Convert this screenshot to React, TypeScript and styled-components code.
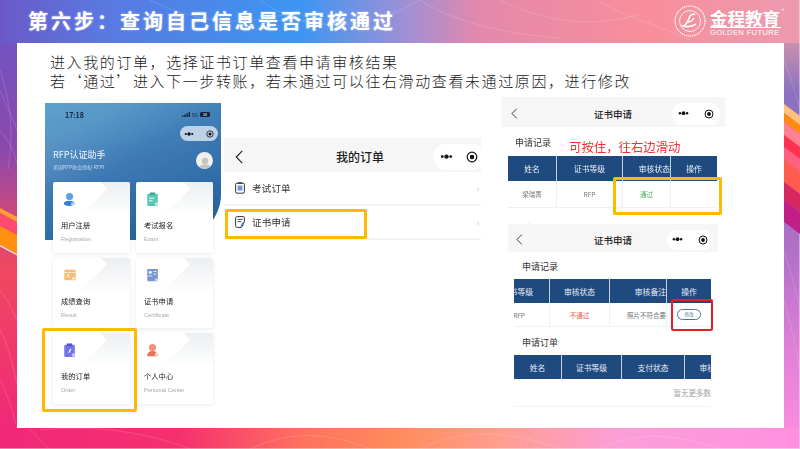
import React from 'react';
import styled, { createGlobalStyle } from 'styled-components';

const GlobalStyle = createGlobalStyle`
  html, body {
    margin: 0;
    padding: 0;
    background: #fff;
  }
  * {
    box-sizing: border-box;
  }
`;

const CJK = `"Noto Sans CJK SC", "Noto Sans", sans-serif`;

const Slide = styled.div`
  position: relative;
  width: 800px;
  height: 449px;
  overflow: hidden;
  font-family: ${CJK};
  box-shadow: inset -1px -1px 0 rgba(255, 255, 255, 0.4);
  background:
    linear-gradient(90deg, #6b58c8 0, #5a78e0 100px, #3c96f2 300px, #9a90d8 400px, #e488ac 480px, #f88f9a 650px, #ec9ab0 800px) top / 100% 43px no-repeat,
    linear-gradient(90deg, #f02878 0, #f5306f 180px, #ff7060 300px, #ff8c5c 400px, #ff9e90 500px, #fc9ed8 620px, #ff90e0 800px) bottom / 100% 21px no-repeat,
    linear-gradient(180deg, #6b58c8 0, #8a48ac 150px, #c84880 210px, #f04860 270px, #f02878 430px) left / 20px 100% no-repeat,
    linear-gradient(180deg, #ec9ab0 0, #c890b0 43px, #8a70c0 95px, #b070c8 250px, #e080d8 350px, #ff90e0 449px) right / 20px 100% no-repeat,
    #fff;
`;

const Leaves = styled.svg`
  position: absolute;
  inset: 0;
  width: 800px;
  height: 449px;
`;

const Header = styled.header`
  position: relative;
  height: 43px;
  display: flex;
  align-items: center;
  justify-content: space-between;
  padding: 0 19px 1px 28px;
`;

const Title = styled.h1`
  margin: 0;
  color: #fff;
  font-size: 20px;
  font-weight: 700;
  letter-spacing: 3px;
  line-height: 26px;
  white-space: nowrap;
  text-shadow: 0 0 2px rgba(255, 255, 255, 0.6);
`;

const Logo = styled.div`
  display: flex;
  align-items: center;
  gap: 4px;
  color: #fff;
`;

const LogoText = styled.div`
  display: flex;
  flex-direction: column;
  width: 71px;
  margin-top: 3px;
`;

const LogoName = styled.div`
  position: relative;
  height: 19px;
  font-size: 17.5px;
  font-weight: 700;
  line-height: 18px;
  white-space: nowrap;
  border-bottom: 1px solid #fff;
  &::after {
    content: '®';
    position: absolute;
    right: -3px;
    top: -1px;
    font-size: 4px;
    line-height: 5px;
    font-weight: 400;
  }
`;

const LogoEn = styled.div`
  font-family: "Liberation Sans", sans-serif;
  font-size: 7.6px;
  line-height: 9px;
  letter-spacing: 0.35px;
  white-space: nowrap;
`;

const Panel = styled.main`
  position: relative;
  width: 767px;
  height: 385px;
  margin-left: 17px;
  background: #fff;
  padding-top: 9px;
`;

const Intro = styled.div`
  margin-left: 33px;
  font-size: 15px;
  font-weight: 300;
  line-height: 19px;
  letter-spacing: 1.6px;
  color: #1c1c1c;
  white-space: nowrap;
`;

const Shots = styled.div`
  display: flex;
  align-items: flex-start;
  margin-top: 7px;
`;

const Home = styled.section`
  position: relative;
  width: 176px;
  margin: 6px 0 0 28px;
  padding: 0 8px;
  filter: blur(0.35px);
  &::before {
    content: '';
    position: absolute;
    inset: 0 0 auto 0;
    height: 137px;
    border-radius: 0 0 46px 0;
    background:
      linear-gradient(150deg, rgba(255, 255, 255, 0.1) 20%, rgba(255, 255, 255, 0) 45%),
      linear-gradient(160deg, #4a96c8 0%, #3e79b4 45%, #1e5c98 100%);
  }
`;

const HomeInner = styled.div`
  position: relative;
  color: #fff;
`;

const Status = styled.div`
  display: flex;
  justify-content: space-between;
  align-items: center;
  height: 23px;
  padding: 0 3px 0 12px;
  font-size: 7px;
  font-weight: 700;
  color: #15233a;
`;

const StatusRight = styled.div`
  display: flex;
  align-items: center;
  gap: 2px;
  font-size: 5px;
  font-weight: 400;
`;

const Battery = styled.span`
  width: 10px;
  height: 5px;
  border-radius: 1.5px;
  background: #15233a;
  color: #fff;
  font-size: 4px;
  line-height: 5px;
  text-align: center;
`;

const Capsule = styled.div<{ $light?: boolean; $w: number; $h: number }>`
  display: flex;
  align-items: center;
  justify-content: space-between;
  width: ${(p) => p.$w}px;
  height: ${(p) => p.$h}px;
  padding: 0 ${(p) => Math.round(p.$h / 4)}px;
  border-radius: ${(p) => p.$h / 2}px;
  background: ${(p) => (p.$light ? '#fff' : 'rgba(225, 235, 245, 0.78)')};
  color: #111;
  flex: none;
`;

const CapsuleRow = styled.div`
  display: flex;
  justify-content: flex-end;
  margin: 0 -5px 0 0;
`;

const AppHead = styled.div`
  display: flex;
  justify-content: space-between;
  align-items: center;
  height: 41px;
`;

const AppName = styled.div`
  margin-top: -3px;
  font-size: 9px;
  line-height: 14px;
  color: #f2f6fb;
`;

const AppSub = styled.div`
  font-size: 5px;
  line-height: 10px;
  color: #c7d8ea;
`;

const Avatar = styled.div`
  display: flex;
  align-items: flex-end;
  justify-content: center;
  width: 17px;
  height: 17px;
  margin-top: -3px;
  border-radius: 50%;
  overflow: hidden;
  background: #f1f0ee;
`;

const Cards = styled.div`
  display: grid;
  grid-template-columns: 77px 77px;
  grid-auto-rows: 70.5px;
  column-gap: 6px;
  row-gap: 5px;
`;

const Card = styled.div`
  position: relative;
  overflow: hidden;
  display: flex;
  flex-direction: column;
  padding: 10px 8px 0;
  border-radius: 2px;
  background: #fff;
  box-shadow: 0 1px 4px rgba(60, 70, 90, 0.12);
  &::before {
    content: '';
    position: absolute;
    inset: 0 0 auto 0;
    height: 34px;
    background: linear-gradient(180deg, #eceef1 0%, rgba(255, 255, 255, 0) 100%);
    clip-path: polygon(62% 0, 100% 0, 100% 100%, 30% 100%, 55% 55%, 70% 20%);
  }
`;

const CardIcon = styled.svg`
  position: relative;
  display: block;
  width: 14px;
  height: 15px;
  margin-left: 2px;
`;

const CardTitle = styled.div`
  position: relative;
  margin-top: 13px;
  font-size: 7.3px;
  line-height: 11px;
  color: #222;
`;

const CardSub = styled.div`
  margin-top: 4px;
  font-family: "Liberation Sans", sans-serif;
  font-size: 5.6px;
  line-height: 8px;
  color: #a9a9a9;
  white-space: nowrap;
`;

const Highlight = styled.div<{ $x: number; $y: number; $w: number; $h: number; $red?: boolean }>`
  position: absolute;
  left: ${(p) => p.$x}px;
  top: ${(p) => p.$y}px;
  width: ${(p) => p.$w}px;
  height: ${(p) => p.$h}px;
  border: ${(p) => (p.$red ? '2px solid #ee1c25' : '3px solid #ffb900')};
  border-radius: 2px;
`;

const Orders = styled.section`
  width: 257px;
  margin: 41px 0 0 3px;
  overflow: hidden;
  filter: blur(0.3px);
`;

const NavBar = styled.div<{ $h: number; $shift?: number }>`
  position: relative;
  display: flex;
  align-items: center;
  justify-content: center;
  height: ${(p) => p.$h}px;
  padding: 3px 0 0 ${(p) => p.$shift || 0}px;
  background: #f6f6f6;
`;

const NavSide = styled.div<{ $left?: boolean; $offset: number }>`
  position: absolute;
  top: 3px;
  bottom: 0;
  display: flex;
  align-items: center;
  ${(p) => (p.$left ? `left: ${p.$offset}px;` : `right: ${p.$offset}px;`)}
`;

const NavTitle = styled.div<{ $size: number }>`
  font-size: ${(p) => p.$size}px;
  font-weight: 500;
  color: #1b1b1b;
`;

const OrderRow = styled.div<{ $h: number }>`
  position: relative;
  display: flex;
  align-items: center;
  gap: 7px;
  height: ${(p) => p.$h}px;
  padding-left: 11px;
  font-size: 9.5px;
  letter-spacing: 0.2px;
  color: #333;
  border-bottom: 2px solid #f4f4f4;
`;

const Chevron = styled.span`
  position: absolute;
  right: 0;
  top: 50%;
  margin-top: -4px;
  width: 4px;
  height: 8px;
  overflow: hidden;
  color: #aaa;
  font-size: 7px;
  line-height: 8px;
`;

const Certs = styled.section`
  width: 224px;
  margin-left: 20px;
  filter: blur(0.35px);
`;

const CertTop = styled.div`
  position: relative;
  height: 127px;
  overflow: hidden;
`;

const CertBottom = styled.div`
  width: 210px;
  margin-left: 7px;
  background: #fff;
`;

const SectionName = styled.div<{ $h: number; $indent: number }>`
  display: flex;
  align-items: center;
  height: ${(p) => p.$h}px;
  padding: 2px 0 0 ${(p) => p.$indent}px;
  font-size: 9px;
  color: #333;
`;

const Hint = styled.div`
  position: absolute;
  left: 68px;
  top: 41px;
  font-size: 12.4px;
  line-height: 18px;
  color: #f2302e;
  white-space: nowrap;
`;

const TableWrap = styled.div<{ $indent: number; $w: number }>`
  width: ${(p) => p.$w}px;
  margin-left: ${(p) => p.$indent}px;
  overflow: hidden;
`;

const Row = styled.div<{ $cols: string; $h: number; $head?: boolean }>`
  display: grid;
  grid-template-columns: ${(p) => p.$cols};
  height: ${(p) => p.$h}px;
  background: ${(p) => (p.$head ? '#1f4a80' : '#fff')};
  border-bottom: ${(p) => (p.$head ? '0' : '1px solid #f0f0f0')};
`;

const Cell = styled.div<{ $head?: boolean; $tone?: string; $end?: number }>`
  display: flex;
  align-items: center;
  justify-content: ${(p) => (p.$end !== undefined ? 'flex-end' : 'center')};
  padding-right: ${(p) => p.$end || 0}px;
  overflow: hidden;
  white-space: nowrap;
  font-size: ${(p) => (p.$head ? 7.8 : 6.5)}px;
  color: ${(p) => (p.$head ? '#e8eef6' : p.$tone || '#777')};
  border-right: 1px solid ${(p) => (p.$head ? '#c3d0e0' : '#f0f0f0')};
  &:last-child {
    border-right: 0;
  }
`;

const EditBtn = styled.span`
  display: block;
  width: 24px;
  height: 11px;
  border: 1px solid #4a72a6;
  border-radius: 6px;
  color: #4a72a6;
  font-size: 4.5px;
  line-height: 9px;
  text-align: center;
`;

const EmptyRow = styled.div`
  height: 28px;
  line-height: 27px;
  text-align: right;
  overflow: hidden;
  white-space: nowrap;
  font-size: 7.5px;
  color: #a5a5a5;
  border-bottom: 1px solid #f2f2f2;
`;

const Dots = ({ size }: { size: number }) => (
  <svg width={size} height={size * 0.4} viewBox="0 0 20 8">
    <circle cx="3.5" cy="4" r="2.2" fill="currentColor" />
    <circle cx="10" cy="4" r="3.4" fill="currentColor" />
    <circle cx="16.5" cy="4" r="2.2" fill="currentColor" />
  </svg>
);

const Target = ({ size }: { size: number }) => (
  <svg width={size} height={size} viewBox="0 0 20 20">
    <circle cx="10" cy="10" r="8" fill="none" stroke="currentColor" strokeWidth="2" />
    <circle cx="10" cy="10" r="3.8" fill="currentColor" />
  </svg>
);

const Back = ({ size }: { size: number }) => (
  <svg width={size * 0.6} height={size} viewBox="0 0 6 10">
    <path d="M5.2.6.9 5l4.3 4.4" fill="none" stroke="#222" strokeWidth="0.8" />
  </svg>
);

const leafPaths = [
  'M0 70C10 100 14 130 8 170',
  'M0 90C8 110 14 120 17 130',
  'M0 130C8 140 14 150 17 165',
  'M0 290C8 300 12 310 17 320',
  'M0 330C8 345 12 360 17 385',
  'M0 380C8 395 12 410 17 428',
  'M40 430C90 425 140 430 190 449',
  'M30 428C36 436 44 444 50 449',
  'M150 0C190 20 240 30 300 10',
  'M260 0C300 30 360 36 420 0',
  'M420 0C450 20 500 34 560 38',
  'M500 0C540 20 590 30 640 14',
  'M600 2C630 18 660 26 690 40',
  'M784 60C792 80 796 95 800 110',
  'M784 250C790 270 796 290 800 310',
  'M784 300C790 320 796 350 800 370',
  'M250 449C290 430 330 432 370 449',
  'M420 449C460 428 510 430 560 449',
  'M600 449C630 432 670 432 720 449',
];

// colour bands that cross the side strips, listed as [top at inner edge, bottom at inner edge, colour]
const leftBands: [number, number, string][] = [
  [217, 222, '#ffa030'],
  [222, 235, '#ff4a70'],
  [235, 254, '#ff9010'],
  [254, 255.5, '#fbe4f4'],
];

const rightBands: [number, number, string][] = [
  [104, 113, '#ffc080'],
  [113, 122, '#ff8a10'],
  [122, 135, '#ff8090'],
  [135, 147, '#ff3050'],
  [147, 160, '#ff6080'],
  [160, 182, '#ff5c50'],
  [182, 200, '#d82860'],
  [200, 222, '#c02088'],
];

const homeCards = [
  { title: '用户注册', sub: 'Registration', kind: 'user' },
  { title: '考试报名', sub: 'Exam', kind: 'exam' },
  { title: '成绩查询', sub: 'Result', kind: 'result' },
  { title: '证书申请', sub: 'Certificate', kind: 'cert' },
  { title: '我的订单', sub: 'Order', kind: 'order' },
  { title: '个人中心', sub: 'Personal Center', kind: 'person' },
];

const HomeIcon = ({ kind }: { kind: string }) => {
  if (kind === 'user') {
    return (
      <CardIcon viewBox="0 0 15 17">
        <circle cx="7" cy="5" r="4" fill="#5c9ee8" />
        <ellipse cx="6.5" cy="13" rx="6" ry="3" fill="#3a7cd8" />
        <ellipse cx="11" cy="13.5" rx="2.6" ry="1.6" fill="#b9d4f2" />
      </CardIcon>
    );
  }
  if (kind === 'exam') {
    return (
      <CardIcon viewBox="0 0 15 17">
        <rect x="1" y="2" width="12" height="14" rx="1.5" fill="#5cc8b4" />
        <rect x="4" y="0.5" width="6" height="3" fill="#3fa896" />
        <path d="M3 7h6M3 10h4" stroke="#fff" strokeWidth="1" />
        <circle cx="11.5" cy="13.5" r="2" fill="#bfe9df" />
      </CardIcon>
    );
  }
  if (kind === 'result') {
    return (
      <CardIcon viewBox="0 0 15 17">
        <rect x="1" y="2" width="13" height="12" rx="1.5" fill="#f8bb72" />
        <path d="M1 5h13" stroke="#fff" strokeWidth="0.8" />
        <path d="M4 11l1.5-4L7 11" stroke="#fff" strokeWidth="0.9" fill="none" />
        <circle cx="11.5" cy="12" r="2" fill="#fde2bf" />
      </CardIcon>
    );
  }
  if (kind === 'cert') {
    return (
      <CardIcon viewBox="0 0 15 17">
        <rect x="1" y="1" width="12" height="14" rx="1" fill="#7596d0" />
        <circle cx="4.5" cy="5" r="1.6" fill="#fff" />
        <path d="M2.5 10c.5-2 3.5-2 4 0M8 4h3.5M8 7h3.5" stroke="#fff" strokeWidth="0.9" fill="none" />
        <circle cx="11.5" cy="13.5" r="2" fill="#c7d6ee" />
      </CardIcon>
    );
  }
  if (kind === 'order') {
    return (
      <CardIcon viewBox="0 0 15 17">
        <rect x="1" y="2" width="12" height="14" rx="1.5" fill="#7574ea" />
        <rect x="4" y="0.5" width="6" height="3" fill="#5554c8" />
        <path d="M6 11l2.5-4" stroke="#fff" strokeWidth="1.4" />
        <circle cx="11.5" cy="13.5" r="2" fill="#c9c8f6" />
      </CardIcon>
    );
  }
  return (
    <CardIcon viewBox="0 0 15 17">
      <circle cx="7" cy="5" r="4" fill="#f0907c" />
      <path d="M1 15c0-5 3-6 6-6s5 1 6 6z" fill="#e8705c" />
      <circle cx="11.5" cy="13" r="2" fill="#f9cfc6" />
    </CardIcon>
  );
};

const recordCols = '49px 66px 48px 46px';
const fixCols = '36px 60px 57px 44px';
const orderCols = '48px 60px 63px 60px';

export default function App() {
  return (
    <>
      <GlobalStyle />
      <Slide>
        <Leaves viewBox="0 0 800 449" fill="none" stroke="#fff" strokeOpacity="0.14">
          {leftBands.map(([a, b, c]) => (
            <polygon key={c} points={`0,${a - 9} 17,${a} 17,${b} 0,${b - 9}`} fill={c} stroke="none" />
          ))}
          {rightBands.map(([a, b, c]) => (
            <polygon key={c} points={`784,${a} 800,${a + 12} 800,${b + 12} 784,${b}`} fill={c} stroke="none" />
          ))}
          {leafPaths.map((d) => (
            <path key={d} d={d} />
          ))}
        </Leaves>
        <Header>
          <Title>第六步：查询自己信息是否审核通过</Title>
          <Logo>
            <svg width="32" height="32" viewBox="0 0 32 32">
              <circle cx="16" cy="16" r="15" fill="none" stroke="#fff" strokeWidth="1.2" strokeDasharray="1.4 0.8" />
              <circle cx="16" cy="16" r="10.5" fill="none" stroke="#fff" strokeWidth="0.8" />
              <path
                d="M21 10c-2-2-5 0-6 3s-3 7-6 8c2 1 9 1 13-2M13 17c3 0 6-2 7-4"
                fill="none"
                stroke="#fff"
                strokeWidth="1.6"
              />
            </svg>
            <LogoText>
              <LogoName>金程教育</LogoName>
              <LogoEn>GOLDEN FUTURE</LogoEn>
            </LogoText>
          </Logo>
        </Header>
        <Panel>
          <Intro>
            <div>进入我的订单，选择证书订单查看申请审核结果</div>
            <div>若‘通过’进入下一步转账，若未通过可以往右滑动查看未通过原因，进行修改</div>
          </Intro>
          <Shots>
            <Home>
              <HomeInner>
                <Status>
                  <span>17:18</span>
                  <StatusRight>
                    <svg width="8" height="5" viewBox="0 0 8 5">
                      <path d="M0 3.5h1.4V5H0zM2.2 2.4h1.4V5H2.2zM4.4 1.2h1.4V5H4.4zM6.6 0H8v5H6.6z" fill="#15233a" />
                    </svg>
                    5G
                    <Battery>30</Battery>
                  </StatusRight>
                </Status>
                <CapsuleRow>
                  <Capsule $w={38} $h={15}>
                    <Dots size={10} />
                    <Target size={8} />
                  </Capsule>
                </CapsuleRow>
                <AppHead>
                  <div>
                    <AppName>RFP认证助手</AppName>
                    <AppSub>美国RFP协会授权-RFPI</AppSub>
                  </div>
                  <Avatar>
                    <svg width="12" height="14" viewBox="0 0 12 14">
                      <circle cx="6" cy="6" r="3.2" fill="#c8c5c0" />
                      <path d="M0 14c0-4 3-4.5 6-4.5S12 10 12 14z" fill="#c8c5c0" />
                    </svg>
                  </Avatar>
                </AppHead>
                <Cards>
                  {homeCards.map((c) => (
                    <Card key={c.kind}>
                      <HomeIcon kind={c.kind} />
                      <CardTitle>{c.title}</CardTitle>
                      <CardSub>{c.sub}</CardSub>
                    </Card>
                  ))}
                </Cards>
              </HomeInner>
            </Home>
            <Orders>
              <NavBar $h={34} $shift={15}>
                <NavSide $left $offset={11}>
                  <Back size={14} />
                </NavSide>
                <NavTitle $size={12}>我的订单</NavTitle>
                <NavSide $offset={-4}>
                  <Capsule $light $w={52} $h={26}>
                    <Dots size={13} />
                    <Target size={12} />
                  </Capsule>
                </NavSide>
              </NavBar>
              <OrderRow $h={34}>
                <svg width="10" height="12" viewBox="0 0 10 12">
                  <rect x="0.6" y="1.2" width="8.8" height="10" rx="1.4" fill="none" stroke="#333" strokeWidth="1" />
                  <rect x="2.6" y="3.6" width="4.8" height="5" fill="#6f94d8" />
                  <path d="M3 1h4" stroke="#333" strokeWidth="1.4" />
                </svg>
                考试订单
                <Chevron>›</Chevron>
              </OrderRow>
              <OrderRow $h={34}>
                <svg width="10" height="12" viewBox="0 0 10 12">
                  <path d="M.6 2.2C.6 1.2 1.2.6 2.2.6h6.2c.6 0 1 .4 1 1v4L7 10.8c-.3.5-.6.6-1 .6H2.2c-1 0-1.6-.6-1.6-1.6z" fill="none" stroke="#333" />
                  <path d="M2.6 3.4h5M2.6 5.6h3.6" stroke="#333" strokeWidth="0.9" />
                  <path d="M8.6 6 5.8 10.4" stroke="#3f7fe0" strokeWidth="1.2" />
                </svg>
                证书申请
                <Chevron>›</Chevron>
              </OrderRow>
            </Orders>
            <Certs>
              <CertTop>
                <NavBar $h={30}>
                  <NavSide $left $offset={10}>
                    <Back size={11} />
                  </NavSide>
                  <NavTitle $size={9.5}>证书申请</NavTitle>
                  <NavSide $offset={5}>
                    <Capsule $light $w={48} $h={22}>
                      <Dots size={11} />
                      <Target size={10} />
                    </Capsule>
                  </NavSide>
                </NavBar>
                <SectionName $h={29} $indent={14}>申请记录</SectionName>
                <Hint>可按住，往右边滑动</Hint>
                <TableWrap $indent={7} $w={209}>
                  <Row $cols={recordCols} $h={25} $head>
                    <Cell $head>姓名</Cell>
                    <Cell $head>证书等级</Cell>
                    <Cell $head $end={0}>审核状态</Cell>
                    <Cell $head>操作</Cell>
                  </Row>
                  <Row $cols={recordCols} $h={27}>
                    <Cell>梁瑞菁</Cell>
                    <Cell>RFP</Cell>
                    <Cell $tone="#54b060">通过</Cell>
                    <Cell />
                  </Row>
                </TableWrap>
                <SectionName $h={38} $indent={14}>申请订单</SectionName>
              </CertTop>
              <CertBottom>
                <NavBar $h={28}>
                  <NavSide $left $offset={8}>
                    <Back size={11} />
                  </NavSide>
                  <NavTitle $size={9.5}>证书申请</NavTitle>
                  <NavSide $offset={5}>
                    <Capsule $light $w={46} $h={20}>
                      <Dots size={11} />
                      <Target size={10} />
                    </Capsule>
                  </NavSide>
                </NavBar>
                <SectionName $h={27} $indent={14}>申请记录</SectionName>
                <TableWrap $indent={6} $w={197}>
                  <Row $cols={fixCols} $h={24} $head>
                    <Cell $head $end={16}>证书等级</Cell>
                    <Cell $head>审核状态</Cell>
                    <Cell $head $end={0}>审核备注</Cell>
                    <Cell $head>操作</Cell>
                  </Row>
                  <Row $cols={fixCols} $h={24}>
                    <Cell $end={24}>RFP</Cell>
                    <Cell $tone="#e8604c">不通过</Cell>
                    <Cell $end={0}>照片不符合要</Cell>
                    <Cell><EditBtn>修改</EditBtn></Cell>
                  </Row>
                </TableWrap>
                <SectionName $h={28} $indent={14}>申请订单</SectionName>
                <TableWrap $indent={6} $w={197}>
                  <Row $cols={orderCols} $h={24} $head>
                    <Cell $head>姓名</Cell>
                    <Cell $head>证书等级</Cell>
                    <Cell $head>支付状态</Cell>
                    <Cell $head>审核状态</Cell>
                  </Row>
                  <EmptyRow>暂无更多数</EmptyRow>
                </TableWrap>
              </CertBottom>
            </Certs>
          </Shots>
          <Highlight $x={25} $y={285} $w={95} $h={84} />
          <Highlight $x={208} $y={166} $w={142} $h={30} />
          <Highlight $x={596} $y={134} $w={109} $h={38} />
          <Highlight $x={654} $y={256} $w={42} $h={32} $red />
        </Panel>
      </Slide>
    </>
  );
}
